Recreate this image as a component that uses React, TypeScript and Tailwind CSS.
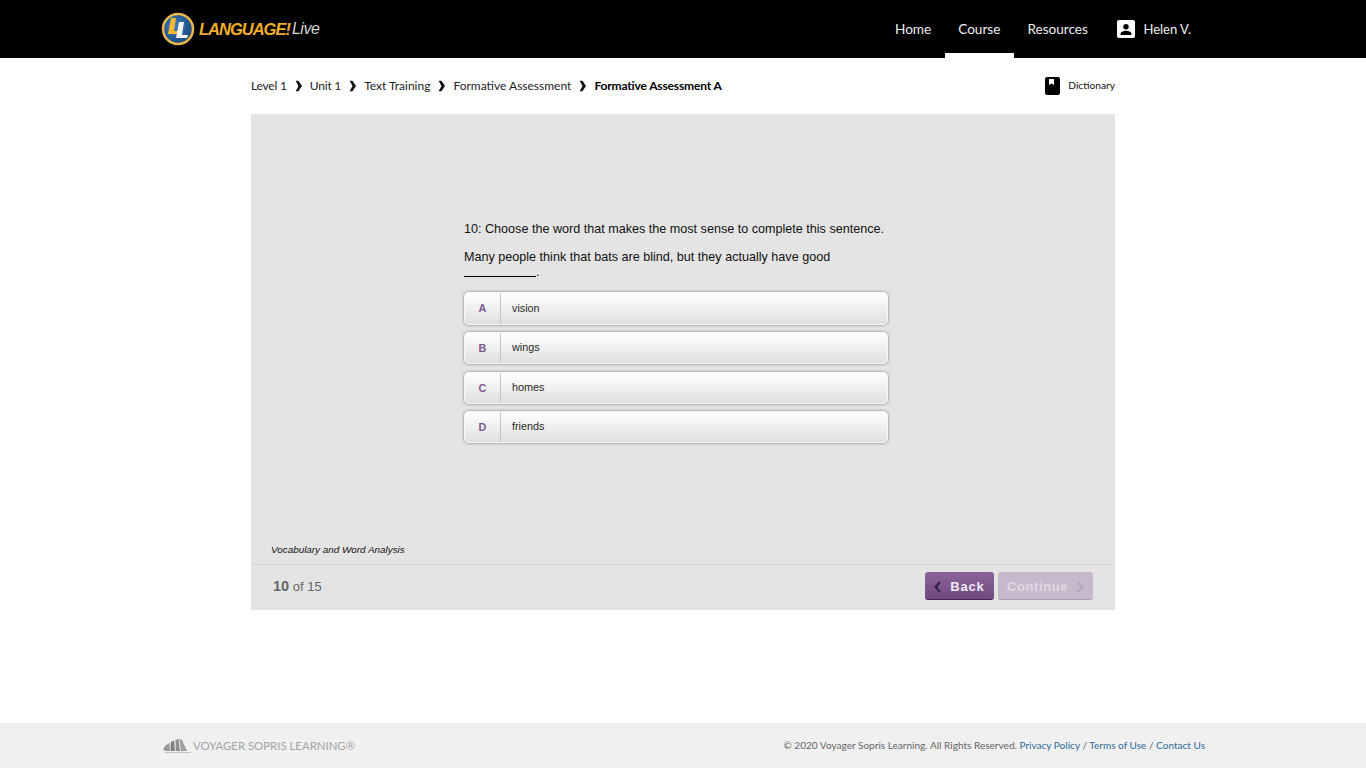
import React from "react";

const uiFont = "font-['Lato','Noto_Sans',sans-serif]";
const arial = "font-['Liberation_Sans',Arial,sans-serif]";

const Logo = () => (
  <div className="flex items-center">
    <svg width="34" height="34" viewBox="0 0 34 34">
      <defs>
        <radialGradient id="globe" cx="0.4" cy="0.4" r="0.7">
          <stop offset="0" stopColor="#3f7fc0" />
          <stop offset="1" stopColor="#143f73" />
        </radialGradient>
      </defs>
      <circle cx="17" cy="17" r="15" fill="url(#globe)" stroke="#e9b84a" strokeWidth="2.5" />
      <path d="M10 6h5l-2 13h5l-1 3H7z" fill="#f5b82e" />
      <path d="M18 10h5l-2 13h6l-1 3H15z" fill="#f4f4f0" />
    </svg>
    <span className="ml-[4px] text-[16.5px] font-['Liberation_Sans',sans-serif] font-bold italic tracking-[-1px] text-[#f2ae2a]">
      LANGUAGE!
    </span>
    <span className="ml-[2px] text-[16px] font-['Liberation_Sans',sans-serif] italic tracking-[-0.5px] text-[#d2d2d2]">
      Live
    </span>
  </div>
);

const Crumb = () => (
  <svg width="7" height="11" viewBox="0 0 7 11" className="mx-[8px] -translate-y-[0.5px]">
    <path d="M0.5 0h2.8L7 5.5 3.3 11H0.5l3-5.5z" fill="#111" />
  </svg>
);

const options = [
  { letter: "A", word: "vision", h: "h-[33px]", row: "", text: "" },
  { letter: "B", word: "wings", h: "h-[32px]", row: "", text: "pb-[2px]" },
  { letter: "C", word: "homes", h: "h-[32px]", row: "mt-[1px]", text: "pb-[2px]" },
  { letter: "D", word: "friends", h: "h-[32px]", row: "", text: "pb-[2px]" },
];

const App = () => {
  return (
    <div className={`flex min-h-[768px] flex-col bg-white ${uiFont}`}>
      <header className="h-[58px] bg-black">
        <div className="ml-[161px] flex h-full w-[1044px] items-stretch justify-between">
          <div className="flex items-center">
            <Logo />
          </div>
          <nav className="flex items-stretch text-[13.6px] text-[#eeeeee]">
            <a className="flex items-center px-[13.5px]">Home</a>
            <a className="flex items-center border-b-[5px] border-white px-[13.5px] pt-[5px]">Course</a>
            <a className="flex items-center px-[13.5px]">Resources</a>
            <a className="ml-[2px] flex items-center gap-[8px] pl-[14px] pr-[14px]">
              <svg width="18" height="18" viewBox="0 0 18 18">
                <path
                  fillRule="evenodd"
                  d="M2 0h14a2 2 0 0 1 2 2v14a2 2 0 0 1-2 2H2a2 2 0 0 1-2-2V2a2 2 0 0 1 2-2zm7 4a2.7 2.7 0 1 0 0 5.4A2.7 2.7 0 0 0 9 4zm-5.4 9.6V15h10.8v-1.4c0-1.8-3.6-2.8-5.4-2.8s-5.4 1-5.4 2.8z"
                  fill="#fff"
                />
              </svg>
              <span className="pt-[1px] text-[13px]">Helen V.</span>
            </a>
          </nav>
        </div>
      </header>

      <main className="mx-auto w-[864px]">
        <div className="flex h-[56px] items-center justify-between text-[12px] text-[#222]">
          <div className="flex items-center">
            <span className="tracking-[-0.2px]">Level 1</span>
            <Crumb />
            <span className="tracking-[-0.2px]">Unit 1</span>
            <Crumb />
            <span>Text Training</span>
            <Crumb />
            <span>Formative Assessment</span>
            <Crumb />
            <span className="font-bold tracking-[-0.15px] text-black">Formative Assessment A</span>
          </div>
          <div className="flex items-center gap-[8px] text-[10.2px] text-[#111]">
            <svg width="15" height="18" viewBox="0 0 15 18">
              <path
                fillRule="evenodd"
                d="M2 0h11a2 2 0 0 1 2 2v14a2 2 0 0 1-2 2H2a2 2 0 0 1-2-2V2a2 2 0 0 1 2-2zm2 2v6l2.5-1.5L9 8V2z"
                fill="#000"
              />
            </svg>
            Dictionary
          </div>
        </div>

        <section className={`flex h-[496px] flex-col bg-[#e4e4e4] ${arial}`}>
          <div className="flex-1 pl-[213px] pt-[108px]">
            <p className="text-[12.6px] leading-[15px] text-[#111]">
              10: Choose the word that makes the most sense to complete this sentence.
            </p>
            <p className="mt-[13px] w-[425px] text-[12.6px] leading-[15px] text-[#111]">
              Many people think that bats are blind, but they actually have good{" "}
              <span className="inline-block w-[72px] translate-y-[1px] border-b border-black align-baseline" />.
            </p>
            <div className="mt-[12px] flex w-[424px] flex-col gap-[7px]">
              {options.map((o) => (
                <div
                  key={o.letter}
                  className={`flex ${o.h} ${o.row} items-stretch rounded-[5px] border border-[#f7f7f7] bg-gradient-to-b from-white to-[#dfdfdf] shadow-[0_0_3px_rgba(0,0,0,0.5)]`}
                >
                  <div className="flex w-[36px] items-center justify-center border-r border-[#c4c4c4] text-[10.8px] font-bold text-[#7a5a8c]">
                    {o.letter}
                  </div>
                  <div className={`flex items-center pl-[11px] text-[10.8px] text-[#2a2a2a] ${o.text}`}>{o.word}</div>
                </div>
              ))}
            </div>
          </div>
          <div className="h-[21px] pl-[20px] text-[9.9px] italic leading-[13px] text-[#111]">
            Vocabulary and Word Analysis
          </div>
          <div className="flex h-[46px] items-center justify-between border-t border-[#d6d6d6] pl-[22px] pr-[22px]">
            <div className="mb-[1px] text-[13px] text-[#666]">
              <span className="text-[14.5px] font-bold text-[#666]">10</span> of 15
            </div>
            <div className="mb-[3px] flex gap-[4px]">
              <button className="flex h-[28px] w-[69px] items-center justify-center gap-[9px] rounded-[3px] border-b border-[#3f2450] bg-gradient-to-b from-[#8c649c] to-[#6f4a80] pt-[3px] text-[13px] font-bold tracking-[0.8px] text-[#f1ebf4]">
                <svg width="7" height="10" viewBox="0 0 7 10">
                  <path d="M7 0H4.5L0 5l4.5 5H7L3.5 5z" fill="#3a2049" />
                </svg>
                Back
              </button>
              <button className="flex h-[28px] w-[95px] items-center justify-center gap-[9px] rounded-[3px] border-b border-[#a89cae] bg-[#c6b9cc] pt-[3px] text-[13px] font-bold tracking-[0.6px] text-[#e0d8e4]">
                Continue
                <svg width="7" height="10" viewBox="0 0 7 10">
                  <path d="M0 0h2.5L7 5l-4.5 5H0l3.5-5z" fill="#b7a6bf" />
                </svg>
              </button>
            </div>
          </div>
        </section>
      </main>

      <footer className="mt-auto h-[45px] bg-[#f0f0f0]">
        <div className="ml-[161px] flex h-full w-[1044px] items-center justify-between">
          <div className="flex items-center pl-[2px]">
            <svg width="28" height="16" viewBox="0 0 28 16">
              <path d="M0 12C1.500 9 4 7 6.500 6L7 14H2z" fill="#9a9a9a" />
              <path d="M7.500 14 7.800 5 11 3.500 12 14z" fill="#7f7f7f" />
              <path d="M12.800 14 12.400 3 15.500 2 17 14z" fill="#909090" />
              <path d="M18 14 16.300 2 19 3 24 14z" fill="#a0a0a0" />
              <path d="M2 15h26v1H2z" fill="#c4c4c4" />
            </svg>
            <span className="ml-[2px] text-[11.4px] text-[#a5a5a5]">VOYAGER SOPRIS LEARNING®</span>
          </div>
          <div className="text-[10.05px] text-[#666]">
            © 2020 Voyager Sopris Learning. All Rights Reserved.{" "}
            <a className="text-[#2f6a96]">Privacy Policy</a> / <a className="text-[#2f6a96]">Terms of Use</a> /{" "}
            <a className="text-[#2f6a96]">Contact Us</a>
          </div>
        </div>
      </footer>
    </div>
  );
};

export default App;
